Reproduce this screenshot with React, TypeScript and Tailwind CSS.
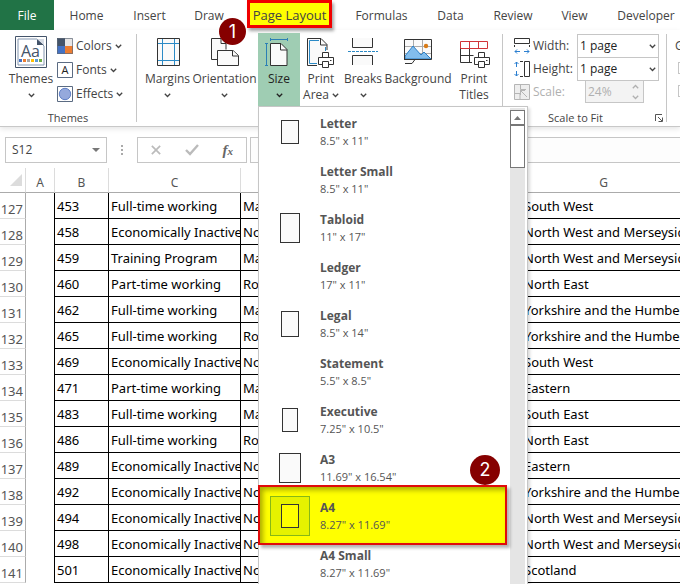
import React, { useState } from 'react';
import clsx from 'clsx';

type PaperSize = {
  name: string;
  dims: string;
  // page thumbnail, left out for sizes that have no preview
  thumb?: string;
};

type SheetRow = [row: number, id: string, status: string, d: string, region: string];

const TABS = [
  { label: 'Home', width: 'w-[65px]' },
  { label: 'Insert', width: 'w-[61px]' },
  { label: 'Draw', width: 'w-[58px]' },
  { label: 'Page Layout', width: 'w-[103px]', active: true },
  { label: 'Formulas', width: 'w-[81px]' },
  { label: 'Data', width: 'w-[57px]' },
  { label: 'Review', width: 'w-[68px]' },
  { label: 'View', width: 'w-[55px]' },
  { label: 'Developer', width: 'w-[88px]' },
];

const PAPER_SIZES: PaperSize[] = [
  { name: 'Letter', dims: '8.5" x 11"', thumb: 'w-[18px] h-6' },
  { name: 'Letter Small', dims: '8.5" x 11"' },
  { name: 'Tabloid', dims: '11" x 17"', thumb: 'w-5 h-[30px]' },
  { name: 'Ledger', dims: '17" x 11"' },
  { name: 'Legal', dims: '8.5" x 14"', thumb: 'w-[18px] h-[26px]' },
  { name: 'Statement', dims: '5.5" x 8.5"' },
  { name: 'Executive', dims: '7.25" x 10.5"', thumb: 'w-4 h-6' },
  { name: 'A3', dims: '11.69" x 16.54"', thumb: 'w-[22px] h-[30px]' },
  { name: 'A4', dims: '8.27" x 11.69"', thumb: 'w-[18px] h-6' },
  { name: 'A4 Small', dims: '8.27" x 11.69"' },
];

const ROWS: SheetRow[] = [
  [127, '453', 'Full-time working', 'Married', 'South West'],
  [128, '458', 'Economically Inactive', 'Not married', 'North West and Merseyside'],
  [129, '459', 'Training Program', 'Married', 'North West and Merseyside'],
  [130, '460', 'Part-time working', 'Room', 'North East'],
  [131, '462', 'Full-time working', 'Married', 'Yorkshire and the Humber'],
  [132, '465', 'Full-time working', 'Room', 'Yorkshire and the Humber'],
  [133, '469', 'Economically Inactive', 'Not married', 'South West'],
  [134, '471', 'Part-time working', 'Married', 'Eastern'],
  [135, '483', 'Full-time working', 'Married', 'South East'],
  [136, '486', 'Full-time working', 'Room', 'North East'],
  [137, '489', 'Economically Inactive', 'Not married', 'Eastern'],
  [138, '492', 'Economically Inactive', 'Not married', 'Yorkshire and the Humber'],
  [139, '494', 'Economically Inactive', 'Not married', 'North West and Merseyside'],
  [140, '498', 'Economically Inactive', 'Not married', 'North West and Merseyside'],
  [141, '501', 'Economically Inactive', 'Not married', 'Scotland'],
];

export default function App() {
  return (
    <div className="relative min-h-screen overflow-hidden bg-white font-['Open_Sans','Noto_Sans',sans-serif] text-xs text-[#444]">
      <TabBar />
      <Ribbon />
      <FormulaBar />
      <Sheet />
    </div>
  );
}

function TabBar() {
  return (
    <nav className="flex h-[30px]">
      <button className="w-[54px] shrink-0 bg-[#217346] pt-[2px] text-white">File</button>
      {TABS.map((tab) => (
        <div key={tab.label} className={clsx('relative flex shrink-0 justify-center', tab.width)}>
          {tab.active && (
            <span className="absolute top-0 left-[9px] h-7 w-[85px] border-[3px] border-[#f00000] bg-[#ff0] shadow-[2px_3px_3px_rgba(0,0,0,0.35)]" />
          )}
          <button className={clsx('relative pt-[2px] whitespace-nowrap', tab.active && 'text-[13px]')}>{tab.label}</button>
          {tab.active && (
            <span className="absolute top-[18px] -left-[19px] z-10 flex size-[27px] items-center justify-center rounded-full bg-[#860000] font-[Inter,sans-serif] text-lg text-white">
              1
            </span>
          )}
        </div>
      ))}
    </nav>
  );
}

function Ribbon() {
  return (
    <div className="flex h-[97px] border-b border-[#c8c8c8] shadow-[0_2px_5px_rgba(0,0,0,0.1)]">
      <section className="relative mt-1 flex h-[88px] w-[137px] shrink-0 border-r border-[#c6c6c6] pl-2">
        <button className="flex h-[68px] w-[46px] flex-col items-center pt-[2px]">
          <ThemesIcon />
          <span className="mt-[2px] leading-[18px]">Themes</span>
          <Chevron className="mt-[5px]" />
        </button>
        <div className="flex flex-col pl-[3px]">
          <SmallButton label="Colors" icon={<ColorsIcon />} />
          <SmallButton label="Fonts" icon={<FontsIcon />} />
          <SmallButton label="Effects" icon={<EffectsIcon />} />
        </div>
        <GroupLabel>Themes</GroupLabel>
      </section>

      <section className="relative mt-1 flex h-[88px] w-[366px] shrink-0 border-r border-[#c6c6c6] pl-[5px]">
        <BigButton label="Margins" width="w-[51px]" icon={<MarginsIcon />} />
        <BigButton label="Orientation" width="w-[63px]" icon={<OrientationIcon />} />
        <div className="relative ml-[2px]">
          <button className="-mt-px flex h-[73px] w-[42px] flex-col items-center bg-[#9fcdb3] pt-[3px] text-[#222]">
            <SizeIcon />
            <span className="mt-[2px] leading-[18px]">Size</span>
            <Chevron className="mt-[5px]" />
          </button>
          <SizeMenu />
        </div>
        <BigButton label="Print" second="Area" width="w-[42px]" icon={<PrintAreaIcon />} />
        <BigButton label="Breaks" width="w-[42px]" icon={<BreaksIcon />} />
        <BigButton label="Background" width="w-[68px]" noChevron icon={<BackgroundIcon />} />
        <BigButton label="Print" second="Titles" width="w-[44px]" noChevron icon={<PrintTitlesIcon />} />
      </section>

      <ScaleToFit />

      <section className="mt-1 min-w-[13px] flex-1 overflow-hidden pl-2">
        <div className="pt-1 leading-4 whitespace-nowrap">Gridlines</div>
        <input type="checkbox" aria-label="View gridlines" className="mt-2 ml-[3px] block size-3 appearance-none border border-[#c6c6c6]" />
        <input type="checkbox" aria-label="Print gridlines" className="mt-[11px] ml-[3px] block size-3 appearance-none border border-[#c6c6c6]" />
      </section>
    </div>
  );
}

function GroupLabel({ children }: { children: React.ReactNode }) {
  return <div className="absolute inset-x-0 bottom-[-4px] text-center text-[11px] leading-4">{children}</div>;
}

function SmallButton({ label, icon }: { label: string; icon: React.ReactNode }) {
  return (
    <button className="flex h-6 items-center gap-[3px] whitespace-nowrap">
      {icon}
      <span>{label}</span>
      <Chevron />
    </button>
  );
}

function BigButton({ label, second, width, icon, noChevron }: {
  label: string;
  second?: string;
  width: string;
  icon: React.ReactNode;
  noChevron?: boolean;
}) {
  return (
    <button className={clsx('flex h-[72px] shrink-0 flex-col items-center pt-[2px] whitespace-nowrap', width)}>
      {icon}
      <span className="mt-[2px] leading-[18px]">{label}</span>
      <span className="flex h-[14px] items-center gap-[3px] leading-[14px]">
        {second}
        {!noChevron && <Chevron />}
      </span>
    </button>
  );
}

function ScaleToFit() {
  return (
    <section className="relative mt-1 h-[88px] w-[164px] shrink-0 border-r border-[#c6c6c6] pl-[11px]">
      <ScaleSelect id="fit-width" label="Width:" icon={<WidthIcon />} />
      <ScaleSelect id="fit-height" label="Height:" icon={<HeightIcon />} />
      <div className="flex h-[23px] items-center text-[#b0b0b0]">
        <ScaleIcon />
        <label htmlFor="fit-scale" className="ml-[3px] w-[52px]">Scale:</label>
        <div className="flex h-[23px] w-[59px] items-center justify-between border border-[#c6c6c6] bg-[#f3f3f3] pr-1 pl-[2px]">
          <input id="fit-scale" disabled defaultValue="24%" className="w-9 bg-transparent text-[#b0b0b0]" />
          <span className="flex flex-col gap-[6px]">
            <Chevron className="rotate-180" />
            <Chevron />
          </span>
        </div>
      </div>
      <div className="absolute inset-x-0 bottom-[-4px] pr-[18px] text-center text-[11px] leading-4">Scale to Fit</div>
      <button aria-label="Page setup" className="absolute right-[3px] bottom-0">
        <svg width="8" height="8" viewBox="0 0 8 8" fill="none" stroke="#555">
          <path d="M.5 7V.5H7M3 3l4 4M7.5 3.5v4h-4" />
        </svg>
      </button>
    </section>
  );
}

function ScaleSelect({ id, label, icon }: { id: string; label: string; icon: React.ReactNode }) {
  return (
    <div className="flex h-[23px] items-center">
      {icon}
      <label htmlFor={id} className="ml-[3px] w-11">{label}</label>
      <div className="relative">
        <select id={id} defaultValue="1 page" className="h-6 w-[82px] appearance-none border border-[#c6c6c6] bg-white pl-[2px] text-[#222]">
          <option>Automatic</option>
          <option>1 page</option>
          <option>2 pages</option>
        </select>
        <Chevron className="pointer-events-none absolute top-[10px] right-[3px]" />
      </div>
    </div>
  );
}

function SizeMenu() {
  const [selected, setSelected] = useState('A4');

  return (
    <div className="absolute top-[72px] left-0 z-20 flex w-[270px] border border-[#c6c6c6] bg-white pt-px shadow-[2px_2px_3px_rgba(0,0,0,0.15)]">
      <ul className="flex-1">
        {PAPER_SIZES.map((size) => (
          <li key={size.name} className="relative h-12">
            {size.name === selected && (
              <span className="absolute -top-[7px] -left-px h-[60px] w-[249px] border-2 border-[#e00b0b] bg-[#ff0] shadow-[3px_3px_3px_rgba(0,0,0,0.3),inset_3px_3px_5px_rgba(90,90,0,0.5)]" />
            )}
            {size.name === selected && (
              <span className="absolute -top-[37px] left-[211px] flex size-[30px] items-center justify-center rounded-full bg-[#860000] font-[Inter,sans-serif] text-lg text-white">
                2
              </span>
            )}
            <button onClick={() => setSelected(size.name)} className="relative flex h-12 w-full items-center pl-[11px] text-left text-[#555]">
              <span className={clsx('flex size-10 items-center justify-center', size.name === selected && 'border border-[#86b817] bg-[#e6f200]')}>
                {size.thumb && (
                  <span className={clsx('border border-[#333]', size.thumb, size.name === selected ? 'bg-[#ff0]' : 'bg-[#fafafa]')} />
                )}
              </span>
              <span className="ml-[10px] flex flex-col leading-[17px]">
                <span className="font-bold">{size.name}</span>
                <span className="text-[11px] leading-[17px]">{size.dims}</span>
              </span>
            </button>
          </li>
        ))}
      </ul>
      <div className="mr-[2px] w-[15px] bg-[#e5e5e5] pt-[2px]">
        <button aria-label="Scroll up" className="flex h-[15px] w-full items-center justify-center border border-[#777] bg-white">
          <svg width="7" height="4" viewBox="0 0 7 4" fill="#777"><path d="M0 4 3.5 0 7 4z" /></svg>
        </button>
        <div className="h-[43px] border border-[#777] bg-white" />
      </div>
    </div>
  );
}

function FormulaBar() {
  return (
    <div className="flex h-[41px] items-start pt-[10px] pl-[5px]">
      <div className="flex h-[26px] w-[102px] shrink-0 items-center border border-[#c6c6c6] bg-white pr-[6px] pl-[6px]">
        <input aria-label="Name box" defaultValue="S12" className="w-full min-w-0 bg-transparent" />
        <svg width="8" height="4" viewBox="0 0 8 4" fill="#777" className="shrink-0"><path d="M0 0h8L4 4z" /></svg>
      </div>
      <svg width="30" height="26" viewBox="0 0 30 26" fill="#aaa" className="shrink-0">
        <path d="M14 8h2v2h-2zM14 12h2v2h-2zM14 16h2v2h-2z" />
      </svg>
      <div className="flex h-[26px] w-[110px] shrink-0 items-center justify-around border border-[#c6c6c6] px-px">
        <button aria-label="Cancel">
          <svg width="10" height="10" viewBox="0 0 12 12" stroke="#bbb" strokeWidth="2"><path d="m1 1 10 10M11 1 1 11" /></svg>
        </button>
        <button aria-label="Enter">
          <svg width="14" height="12" viewBox="0 0 14 12" fill="none" stroke="#bbb" strokeWidth="2.4"><path d="m1 6 4 4 8-9" /></svg>
        </button>
        <button aria-label="Insert function" className="font-['Liberation_Serif',serif] text-[15px] leading-4 font-bold text-[#666] italic">
          f<span className="text-[11px]">x</span>
        </button>
      </div>
      <input aria-label="Formula" className="ml-[3px] h-[26px] min-w-0 flex-1 border border-r-0 border-[#c6c6c6] bg-[#fdfdfd]" />
    </div>
  );
}

function Sheet() {
  return (
    <table className="w-full min-w-[686px] table-fixed border-separate border-spacing-0 font-['Noto_Sans',sans-serif] text-[13px] text-black">
      <colgroup>
        <col className="w-[26px]" />
        <col className="w-[29px]" />
        <col className="w-[54px]" />
        <col className="w-[132px]" />
        <col className="w-[281px]" />
        <col />
      </colgroup>
      <thead>
        <tr className="h-[25px] text-xs text-[#555]">
          <th className="border-r border-b border-r-[#dcdcdc] border-b-[#ababab] p-0">
            <svg width="12" height="12" viewBox="0 0 12 12" fill="#dcdcdc" className="ml-[10px]"><path d="M12 0v12H0z" /></svg>
          </th>
          {['A', 'B', 'C', '', 'G'].map((col) => (
            <th key={col} className="border-r border-b border-r-[#dcdcdc] border-b-[#ababab] p-0 pt-[6px] leading-[18px] font-normal">{col}</th>
          ))}
        </tr>
      </thead>
      <tbody>
        {ROWS.map(([row, id, status, d, region]) => (
          <tr key={row} className="h-[26px] whitespace-nowrap">
            <th className="border-r border-b border-r-[#ababab] border-b-[#dcdcdc] p-0 pt-2 pr-[2px] text-right leading-[17px] font-normal text-[#555]">{row}</th>
            <td className="border-r border-black p-0" />
            <Cell>{id}</Cell>
            <Cell>{status}</Cell>
            <Cell>{d}</Cell>
            <Cell>{region}</Cell>
          </tr>
        ))}
      </tbody>
    </table>
  );
}

function Cell({ children }: { children: React.ReactNode }) {
  return <td className="overflow-hidden border-r border-b border-black p-0 pt-[2px] pl-[2px] leading-[23px]">{children}</td>;
}

function Chevron({ className }: { className?: string }) {
  return (
    <svg width="7" height="5" viewBox="0 0 7 5" fill="none" stroke="currentColor" strokeWidth="1.3" className={clsx('shrink-0', className)}>
      <path d="m.8.8 2.7 2.7L6.2.8" />
    </svg>
  );
}

function ThemesIcon() {
  return (
    <svg width="32" height="32" viewBox="0 0 32 32" className="shrink-0">
      <path d="M.5.5h31v31H.5z" fill="#fff" stroke="#44546a" />
      <path d="M3 3h19l7 7v19H3z" fill="#fff" stroke="#8497b0" />
      <path d="M22 3v6h7z" fill="#44546a" />
      <path d="M22 3h7v6z" fill="#d6dce5" />
      <text x="6" y="21" fontSize="16" fill="#44546a" fontFamily="Open Sans">Aa</text>
      <path d="M4 23h3v3H4z" fill="#4472c4" />
      <path d="M8 23h3v3H8z" fill="#ed7d31" />
      <path d="M12 23h3v3h-3z" fill="#a5a5a5" />
      <path d="M16 23h3v3h-3z" fill="#ffc000" />
      <path d="M20 23h3v3h-3z" fill="#5b9bd5" />
      <path d="M24 23h3v3h-3z" fill="#70ad47" />
    </svg>
  );
}

function ColorsIcon() {
  return (
    <svg width="16" height="16" viewBox="0 0 16 16" className="shrink-0">
      <path d="M0 0h8v8H0z" fill="#44546a" />
      <path d="M8 0h8v8H8z" fill="#e7e6e6" />
      <path d="M0 8h8v8H0z" fill="#4472c4" />
      <path d="M8 8h8v8H8z" fill="#ed7d31" />
      <path d="M.5.5h15v15H.5z" fill="none" stroke="#606a78" strokeOpacity=".7" />
    </svg>
  );
}

function FontsIcon() {
  return (
    <svg width="16" height="16" viewBox="0 0 16 16" className="shrink-0">
      <path d="M.5.5h15v15H.5z" fill="#fff" stroke="#5b6b82" />
      <text x="8" y="12" fontSize="11" textAnchor="middle" fill="#222" fontFamily="Open Sans">A</text>
    </svg>
  );
}

function EffectsIcon() {
  return (
    <svg width="16" height="16" viewBox="0 0 16 16" className="shrink-0">
      <path d="M.5.5h15v15H.5z" fill="#fff" stroke="#5b6b82" />
      <circle cx="8" cy="8" r="5.7" fill="#95a9dc" stroke="#5f7fc5" />
    </svg>
  );
}

function MarginsIcon() {
  return (
    <svg width="32" height="32" viewBox="0 0 32 32" fill="none" className="shrink-0">
      <path d="M5.500 2.500h22v27h-22z" fill="#fafafa" stroke="#333" />
      <path d="M10.500 3v26M22.500 3v26M6 7.500h21M6 24.500h21" stroke="#2b8ac6" />
    </svg>
  );
}

function OrientationIcon() {
  return (
    <svg width="32" height="32" viewBox="0 0 32 32" fill="#fafafa" stroke="#333" className="shrink-0">
      <path d="M8 23.500H2.500v-21H12l5 5v6" />
      <path d="M12 2.500v5h5" />
      <path d="M8.500 14.500H24l5.500 5v10h-21z" />
      <path d="M23.500 14.500v5.500h6" />
    </svg>
  );
}

function SizeIcon() {
  return (
    <svg width="32" height="32" viewBox="0 0 32 32" fill="none" className="shrink-0">
      <path d="M7.500 7.500H18l6 6v16H7.500z" fill="#fafafa" stroke="#333" />
      <path d="M17.500 7.500v6.500H24" stroke="#333" />
      <path d="M7.500 2v3M24.500 2v3M8 3.500h16M2 7.500h3M2 29.500h3M3.500 8v21" stroke="#2b7fb5" />
    </svg>
  );
}

function Printer() {
  return (
    <g fill="#fff" stroke="#333">
      <path d="M17.500 16.500h6v6h-6z" />
      <path d="M13.500 21.500h15v7h-15z" />
      <path d="M17.500 25.500h6v6h-6z" />
      <path d="M25 24.500h1.500" />
    </g>
  );
}

function PrintAreaIcon() {
  return (
    <svg width="32" height="32" viewBox="0 0 32 32" fill="none" className="shrink-0">
      <path d="M12 29.500H2.500v-27H16l6 6V14" fill="#fafafa" stroke="#333" />
      <path d="M15.500 2.500v6.500H22" stroke="#333" />
      <path d="M12 27.500H4.500v-23H14M20.500 11v4" stroke="#2b8ac6" />
      <Printer />
    </svg>
  );
}

function BreaksIcon() {
  return (
    <svg width="32" height="32" viewBox="0 0 32 32" fill="none" className="shrink-0">
      <path d="M5.500 2v9.500h20V2M5.500 29v-9.500h20V29" fill="#fafafa" stroke="#333" />
      <path d="M1 15.500h30" stroke="#2b8ac6" strokeDasharray="3 1" />
    </svg>
  );
}

function BackgroundIcon() {
  return (
    <svg width="32" height="32" viewBox="0 0 32 32" fill="none" className="shrink-0">
      <path d="M2.500 3.500h27v20h-16l-4 4h-7z" fill="#fafafa" />
      <path d="M11.500 4v20M20.500 4v20M3 10.500h26M3 17.500h26" stroke="#aaa" />
      <path d="m3 20 8-10 8 9 3-3 7 7H3z" fill="#83bdec" stroke="#2b7fc6" />
      <circle cx="24" cy="10" r="2.200" fill="#d87a16" />
      <path d="M2.500 24V3.500h27v20H3M3 27.500h7l3-4" stroke="#333" />
    </svg>
  );
}

function PrintTitlesIcon() {
  return (
    <svg width="32" height="32" viewBox="0 0 32 32" fill="none" className="shrink-0">
      <path d="M2.500 12v14.500H14M11.500 12v14M2.500 19.500h13" stroke="#333" />
      <path d="M2.500 5.500h27v7h-27zM11.500 5.500v7M20.500 5.500v7" stroke="#d13438" />
      <g transform="translate(3 0)"><Printer /></g>
    </svg>
  );
}

function WidthIcon() {
  return (
    <svg width="16" height="16" viewBox="0 0 16 16" fill="none" className="shrink-0">
      <path d="M.5.5h15v5H.5z" stroke="#333" />
      <path d="M.5 7v2M15.500 7v2" stroke="#333" />
      <path d="M1 13.500h5M10 13.500h5M3 11.500l-2 2 2 2M13 11.500l2 2-2 2" stroke="#2b7fd0" />
    </svg>
  );
}

function HeightIcon() {
  return (
    <svg width="16" height="16" viewBox="0 0 16 16" fill="none" className="shrink-0">
      <path d="M10.500.5h5v15h-5z" stroke="#333" />
      <path d="M6 .5h3M6 15.500h3" stroke="#333" />
      <path d="M2.500 1v5M2.500 10v5M.5 3l2-2 2 2M.5 13l2 2 2-2" stroke="#2b7fd0" />
    </svg>
  );
}

function ScaleIcon() {
  return (
    <svg width="16" height="16" viewBox="0 0 16 16" fill="#eee" stroke="#b5b5b5" className="shrink-0">
      <path d="M.5.5h15v15H.5z" />
      <path d="M.5 9.500h5.500v6M6.500 .5v5H12M13 13 6 6M6.500 11V6.500H11" fill="none" />
    </svg>
  );
}
